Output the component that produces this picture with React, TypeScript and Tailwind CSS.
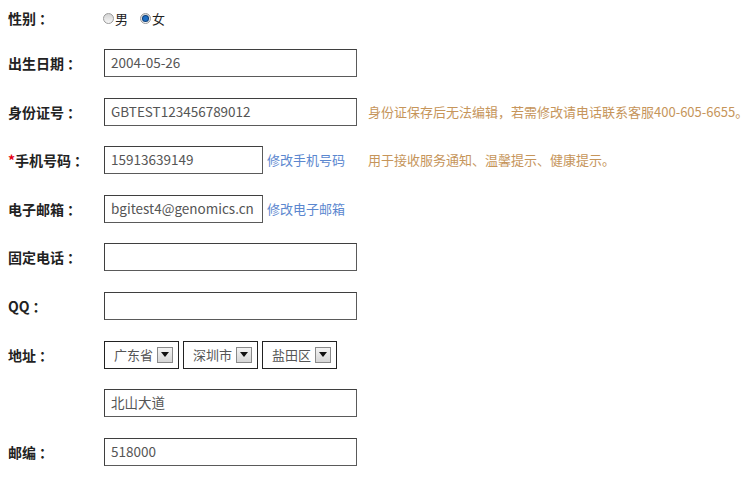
import React from "react";

const FONT = { fontFamily: '"Noto Sans CJK SC", "Noto Sans", sans-serif' };

function Label({ children, required }: { children: React.ReactNode; required?: boolean }) {
  return (
    <div className="w-[96px] shrink-0 text-[14px] font-bold text-[#222] leading-none">
      {required && <span className="text-[#e60012]">*</span>}
      {children}
      <span className="ml-[3px]">：</span>
    </div>
  );
}

function Box({ value, width = "w-[253px]" }: { value?: string; width?: string }) {
  return (
    <div
      className={`${width} h-[28px] shrink-0 border border-[#5a5a5a] border-t-[#3f3f3f] border-l-[#3f3f3f] bg-white flex items-center pl-[6px] text-[13.5px] text-[#555] leading-none overflow-hidden whitespace-nowrap`}
    >
      {value}
    </div>
  );
}

function Radio({ checked }: { checked?: boolean }) {
  return (
    <span className="w-[11px] h-[11px] rounded-full border border-[#9a9a9a] bg-gradient-to-b from-[#d4d4d4] to-[#f6f6f6] flex items-center justify-center">
      {checked && <span className="w-[5px] h-[5px] rounded-full bg-[#1f6fc4] ring-1 ring-[#0c3f7a]" />}
    </span>
  );
}

function Select({ value }: { value: string }) {
  return (
    <div className="w-[75px] h-[28px] border border-[#222] bg-white flex items-center justify-between pl-[9px] pr-[5px]">
      <span className="text-[13px] text-[#555] leading-none">{value}</span>
      <span className="w-[16px] h-[16px] border border-[#8a8a8a] bg-gradient-to-b from-[#f4f4f4] to-[#d6d6d6] flex items-center justify-center">
        <svg width="8" height="5" viewBox="0 0 8 5">
          <path d="M0 0h8L4 5z" fill="#111" />
        </svg>
      </span>
    </div>
  );
}

function Row({ children }: { children: React.ReactNode }) {
  return <div className="h-[28px] flex items-center">{children}</div>;
}

export default function App() {
  return (
    <div className="w-[750px] h-[487px] bg-white pl-[8px] pt-[6px]" style={FONT}>
      {/* gender */}
      <div className="h-[24px] flex items-center">
        <Label>性别</Label>
        <div className="flex items-center text-[13px] text-[#222] leading-none -ml-[1px]">
          <Radio />
          <span className="ml-[1px]">男</span>
          <span className="ml-[12px]" />
          <Radio checked />
          <span className="ml-[1px]">女</span>
        </div>
      </div>

      <div className="mt-[19px] flex flex-col gap-[20.6px]">
        <Row>
          <Label>出生日期</Label>
          <Box value="2004-05-26" />
        </Row>
        <Row>
          <Label>身份证号</Label>
          <Box value="GBTEST123456789012" />
          <span className="ml-[11px] text-[13px] text-[#c6955a] whitespace-nowrap">
            身份证保存后无法编辑，若需修改请电话联系客服400-605-6655。
          </span>
        </Row>
        <Row>
          <Label required>手机号码</Label>
          <Box value="15913639149" width="w-[159px]" />
          <a className="ml-[4px] text-[13px] text-[#5b87cf]">修改手机号码</a>
          <span className="ml-[23px] text-[13px] text-[#c6955a]">用于接收服务通知、温馨提示、健康提示。</span>
        </Row>
        <Row>
          <Label>电子邮箱</Label>
          <Box value="bgitest4@genomics.cn" width="w-[159px]" />
          <a className="ml-[4px] text-[13px] text-[#5b87cf]">修改电子邮箱</a>
        </Row>
        <Row>
          <Label>固定电话</Label>
          <Box />
        </Row>
        <Row>
          <Label>QQ</Label>
          <Box />
        </Row>
        <Row>
          <Label>地址</Label>
          <div className="flex gap-[4px]">
            <Select value="广东省" />
            <Select value="深圳市" />
            <Select value="盐田区" />
          </div>
        </Row>
        <Row>
          <div className="w-[96px] shrink-0" />
          <Box value="北山大道" />
        </Row>
        <Row>
          <Label>邮编</Label>
          <Box value="518000" />
        </Row>
      </div>
    </div>
  );
}
